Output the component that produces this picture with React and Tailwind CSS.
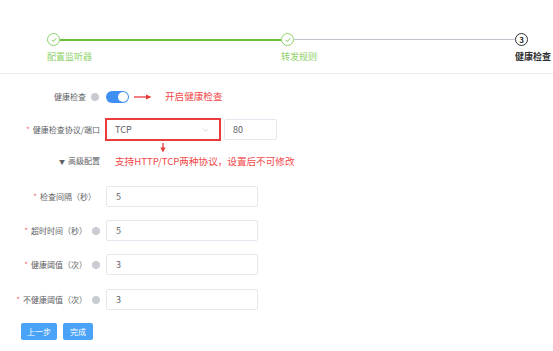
import React from "react";

const font = { fontFamily: '"Noto Sans CJK SC", "Noto Sans", sans-serif' };

function Check() {
  return (
    <svg viewBox="0 0 12 12" className="h-[8px] w-[8px]">
      <path d="M3 6.2l2 2 4-4.4" fill="none" stroke="#67c23a" strokeWidth="1.3" strokeLinecap="round" strokeLinejoin="round" />
    </svg>
  );
}

function Step({ done, num, label, current }) {
  return (
    <div className="w-[13px] shrink-0 flex flex-col items-start">
      <div
        className={`h-[13px] w-[13px] rounded-full border flex items-center justify-center bg-white ${
          done ? "border-[#8fd16a]" : "border-[#303133]"
        }`}
      >
        {done ? <Check /> : <span className="text-[8px] leading-none font-bold text-[#303133]">{num}</span>}
      </div>
      <span
        className={`mt-[6px] whitespace-nowrap text-[9px] leading-[10px] ${
          current ? "font-bold text-[#303133]" : "text-[#8fd16a]"
        }`}
      >
        {label}
      </span>
    </div>
  );
}

function Help() {
  return <span className="ml-[5px] inline-block h-[8px] w-[8px] rounded-full bg-[#c8cbd1]" />;
}

function Label({ text, req, help, pr = "pr-[0px]" }) {
  return (
    <div className={`w-[100px] shrink-0 flex items-center justify-end text-[8px] text-[#606266] ${pr}`}>
      {req && <span className="mr-[3px] text-[#f56c6c]">*</span>}
      <span className="whitespace-nowrap">{text}</span>
      {help && <Help />}
    </div>
  );
}

function Field({ label, value, help, pr, mt }) {
  return (
    <div className={`flex items-center h-[21px] ${mt}`}>
      <Label text={label} req help={help} pr={pr} />
      <div className="ml-[6px] w-[152px] h-[21px] border border-[#e4e7ed] rounded-[2px] flex items-center pl-[9px] text-[9px] text-[#606266]">
        {value}
      </div>
    </div>
  );
}

export default function App() {
  return (
    <div className="w-[553px] h-[351px] bg-white overflow-hidden" style={font}>
      {/* steps */}
      <div className="pt-[33px] pl-[47px] pr-[25px] flex items-start">
        <Step done label="配置监听器" />
        <div className="flex-1 mt-[6px] h-[2px] bg-[#67c23a]" />
        <Step done label="转发规则" />
        <div className="flex-1 mt-[6px] h-[1px] bg-[#c0c4cc]" />
        <Step num="3" label="健康检查" current />
      </div>
      <div className="mt-[11px] h-[1px] bg-[#ebeef5]" />

      {/* health check switch */}
      <div className="mt-[12px] flex items-center h-[21px]">
        <div className="w-[100px] shrink-0 flex items-center justify-end pr-[1px] text-[8px] text-[#606266]">
          <span>健康检查</span>
          <Help />
        </div>
        <div className="ml-[6px] w-[23px] h-[12px] rounded-full bg-[#3f8ff3] flex items-center justify-end pr-[1px]">
          <span className="h-[10px] w-[10px] rounded-full bg-white" />
        </div>
        <svg viewBox="0 0 18 6" className="ml-[5px] w-[18px] h-[6px]">
          <path d="M0 3h13" stroke="#e93a3a" strokeWidth="1.3" />
          <path d="M12 0.6L17.5 3 12 5.4z" fill="#e93a3a" />
        </svg>
        <span className="ml-[13px] text-[9.6px] text-[#f04848]">开启健康检查</span>
      </div>

      {/* protocol / port */}
      <div className="mt-[11px] flex items-center h-[23px]">
        <Label text="健康检查协议/端口" req />
        <div className="relative ml-[5px] w-[116px] h-[23px] border-2 border-[#ec3b3b] flex items-center pl-[8px] pr-[10px] text-[9px] text-[#606266]">
          <span className="flex-1">TCP</span>
          <svg viewBox="0 0 10 6" className="w-[7px] h-[4px]">
            <path d="M1 1l4 4 4-4" fill="none" stroke="#c0c4cc" strokeWidth="1" />
          </svg>
          <svg viewBox="0 0 6 10" className="absolute left-[53px] top-[23px] w-[6px] h-[10px]">
            <path d="M3 0v5" stroke="#e93a3a" strokeWidth="1.3" />
            <path d="M0.4 4.5L3 9.5 5.6 4.5z" fill="#e93a3a" />
          </svg>
        </div>
        <div className="ml-[3px] w-[53px] h-[21px] border border-[#e4e7ed] rounded-[2px] flex items-center pl-[8px] text-[9px] text-[#606266]">
          80
        </div>
      </div>

      {/* advanced */}
      <div className="mt-[13px] flex items-center h-[14px]">
        <div className="w-[100px] shrink-0 flex items-center justify-end text-[8px] text-[#606266]">
          <span className="mr-[3px] text-[6px]">▼</span>
          <span>高级配置</span>
        </div>
        <span className="ml-[15px] whitespace-nowrap text-[9.6px] text-[#f04848]">支持HTTP/TCP两种协议，设置后不可修改</span>
      </div>

      <Field label="检查间隔（秒）" value="5" pr="pr-[4px]" mt="mt-[18px]" />
      <Field label="超时时间（秒）" value="5" help mt="mt-[13px]" />
      <Field label="健康阈值（次）" value="3" help mt="mt-[13px]" />
      <Field label="不健康阈值（次）" value="3" help mt="mt-[14px]" />

      {/* buttons */}
      <div className="mt-[13px] pl-[21px] flex gap-[6px]">
        <button className="w-[36px] h-[17px] rounded-[2px] bg-[#4aa3f7] text-white text-[8px] leading-none">上一步</button>
        <button className="w-[30px] h-[17px] rounded-[2px] bg-[#4aa3f7] text-white text-[8px] leading-none">完成</button>
      </div>
    </div>
  );
}
